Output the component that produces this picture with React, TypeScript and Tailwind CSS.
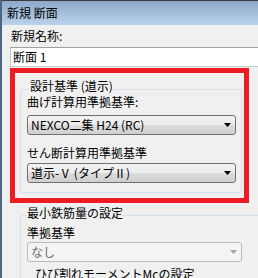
import React from "react";

type ComboProps = { value: string; disabled?: boolean };

const Combo = ({ value, disabled }: ComboProps) => (
  <div
    className={`h-[20px] flex items-center justify-between rounded-[3px] border pl-[3px] pr-[4px] ${
      disabled
        ? "border-[#b8bcbf] bg-[#f4f4f4] text-[#6d6d6d]"
        : "border-[#707070] bg-[linear-gradient(#f3f3f3_0%,#ebebeb_50%,#dddddd_50%,#cfcfcf_100%)] text-black"
    }`}
  >
    <span className="leading-[18px] whitespace-nowrap">{value}</span>
    <svg width="7" height="4" viewBox="0 0 7 4">
      <path d="M0 0h7L3.5 4z" fill={disabled ? "#a3a3a3" : "#000"} />
    </svg>
  </div>
);

export default function App() {
  return (
    <div className="w-[258px] h-[278px] overflow-hidden bg-[#f0f0f0] border-l-2 border-[#4e6580] flex flex-col text-[12px] text-black font-['Noto_Sans_CJK_JP','Liberation_Sans',sans-serif]">
      <div className="h-px shrink-0 bg-[#3c3c3c]" />
      <div className="h-[24px] shrink-0 flex items-center pl-[5px] bg-linear-to-b from-[#8eaaca] to-[#bad2eb]">
        新規 断面
      </div>

      <div className="flex flex-col shrink-0 pl-[8px]">
        <div className="mt-[2px] pl-[1px] h-[17px] leading-[17px]">新規名称:</div>
        <div className="mt-[3px] h-[20px] w-[260px] bg-white border border-[#c5c9cd] border-t-[#a0a0a0] pl-[2px] leading-[18px]">
          断面 1
        </div>

        {/* highlighted block */}
        <div className="mt-[1px] h-[135px] w-[239px] border-[5px] border-[#ed1c24]">
          <div className="ml-[5px] mr-[2px] mt-[16px] border border-[#d5dfe5] rounded-[3px] pl-[6px] pr-[5px] pb-[9px]">
            <div className="-mt-[11px] ml-[2px] w-fit px-[1px] bg-[#f0f0f0] h-[14px] leading-[14px]">
              設計基準 (道示)
            </div>
            <div className="h-[17px] leading-[17px]">曲げ計算用準拠基準:</div>
            <div className="mt-[5px]">
              <Combo value="NEXCO二集 H24 (RC)" />
            </div>
            <div className="mt-[9px] h-[17px] leading-[17px]">せん断計算用準拠基準</div>
            <div className="mt-[2px]">
              <Combo value="道示-Ⅴ (タイプⅡ)" />
            </div>
          </div>
        </div>

        <div className="ml-[10px] mt-[12px] w-[260px] border border-[#d5dfe5] rounded-[3px] pl-[6px]">
          <div className="-mt-[10px] w-fit bg-[#f0f0f0] h-[14px] leading-[14px]">最小鉄筋量の設定</div>
          <div className="mt-[4px] h-[17px] leading-[17px]">準拠基準</div>
          <div className="mt-[1px] w-[215px]">
            <Combo value="なし" disabled />
          </div>
          <div className="mt-[3px] pl-[8px] h-[17px] leading-[17px]">ひび割れモーメントMcの設定</div>
        </div>
      </div>
    </div>
  );
}
